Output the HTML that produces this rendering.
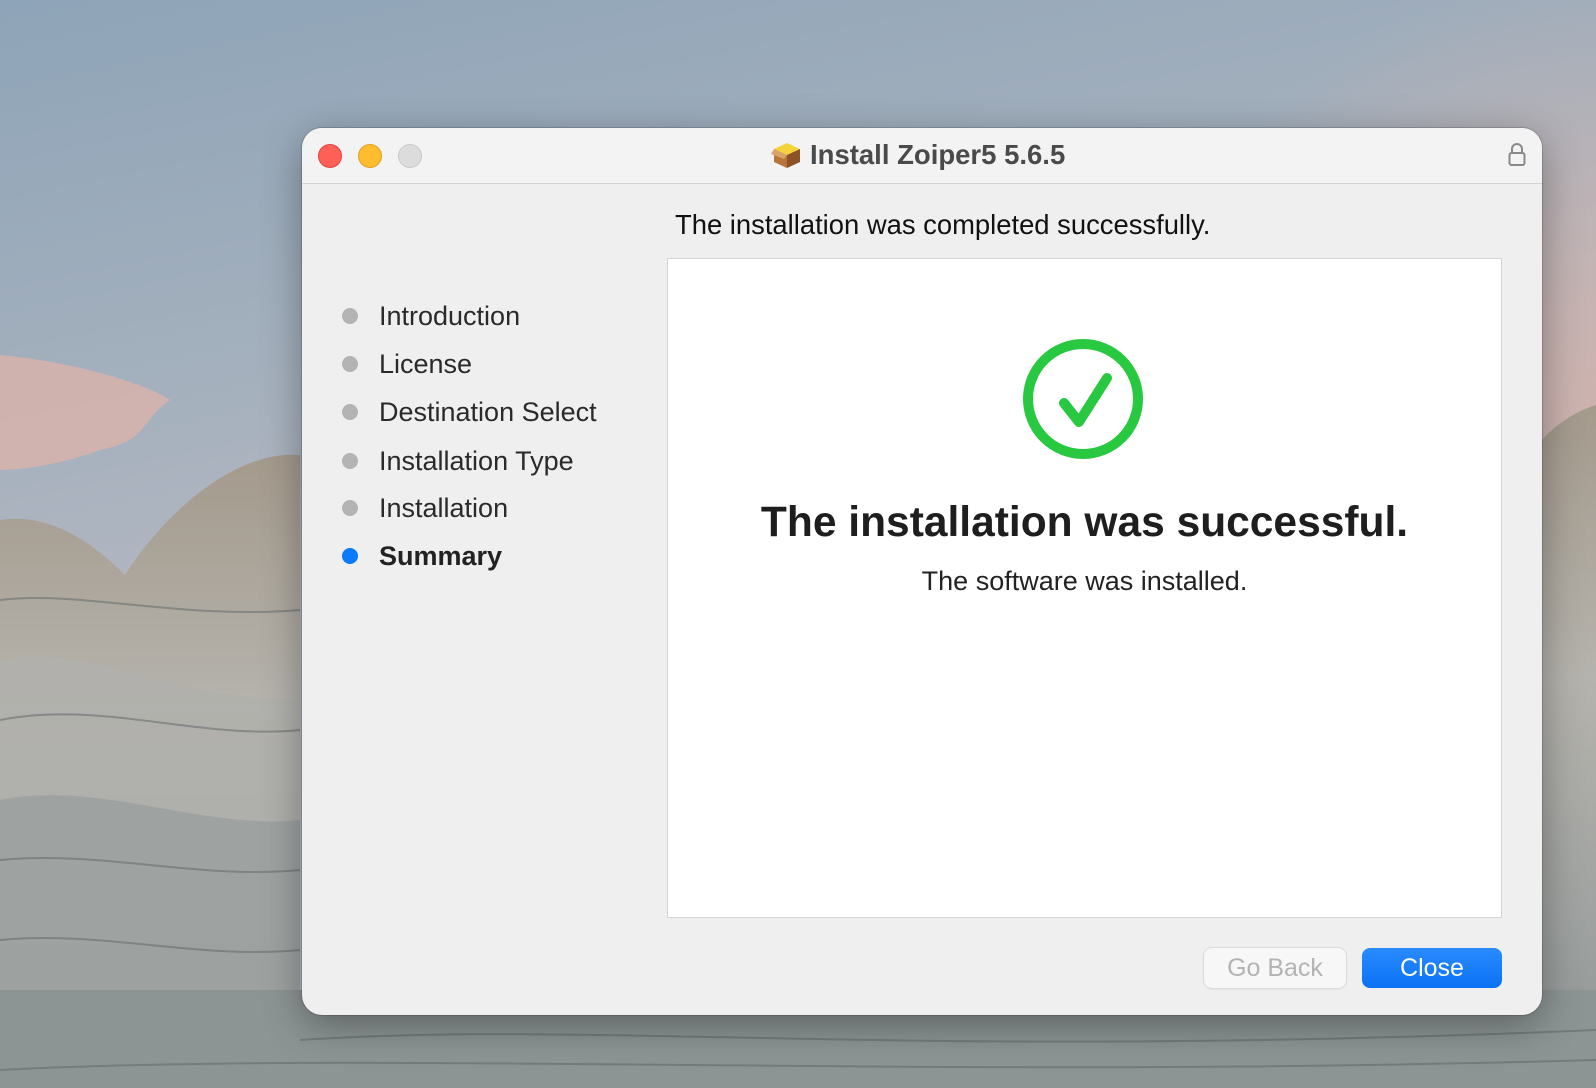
<!DOCTYPE html>
<html><head><meta charset="utf-8"><style>
*{margin:0;padding:0;box-sizing:border-box}
body{width:1596px;height:1088px;overflow:hidden;position:relative;font-family:"Liberation Sans",sans-serif;background:#9fb0c0}
.bg{position:absolute;left:0;top:0}
.win{position:absolute;left:302px;top:128px;width:1240px;height:887px;background:#efefef;border-radius:20px;overflow:hidden;box-shadow:0 10px 40px rgba(0,0,0,.35),0 0 0 1px rgba(0,0,0,.15)}
.tb{position:absolute;left:0;top:0;width:100%;height:56px;background:#f3f3f3;border-bottom:1px solid #d3d3d3}
.dot{position:absolute;top:16px;width:24px;height:24px;border-radius:50%}
.title{position:absolute;left:508px;top:10px;font-size:27.5px;font-weight:bold;color:#4a4a4a;line-height:34px}
.t{position:absolute;white-space:nowrap;color:#222}
.side .b{position:absolute;left:40px;width:16px;height:16px;border-radius:50%;background:#b4b4b4}
.side .t{left:77px;font-size:27px;line-height:30px;color:#2a2a2a}
.box{position:absolute;left:365px;top:130px;width:835px;height:660px;background:#fff;border:1px solid #d4d4d4}
.btn{position:absolute;top:820px;height:40px;border-radius:8px;font-size:25px;text-align:center;line-height:40px}
</style></head><body>
<svg class="bg" width="1596" height="1088">
<defs>
<linearGradient id="sky" x1="0" y1="0" x2="0.3" y2="1"><stop offset="0" stop-color="#8ea4b8"/><stop offset="0.35" stop-color="#a4b0bd"/><stop offset="0.6" stop-color="#b6b9c2"/></linearGradient>
<linearGradient id="rk" x1="0" y1="0" x2="0" y2="1"><stop offset="0" stop-color="#a49a8c"/><stop offset="0.4" stop-color="#b5b3ad"/><stop offset="1" stop-color="#8f9697"/></linearGradient>
<radialGradient id="sun" gradientUnits="userSpaceOnUse" cx="1596" cy="420" r="450"><stop offset="0" stop-color="#cdb2ad"/><stop offset="1" stop-color="#cdb2ad" stop-opacity="0"/></radialGradient>
</defs>
<rect width="1596" height="1088" fill="url(#sky)"/>
<rect width="1596" height="1088" fill="url(#sun)"/>
<path d="M0 355 C60 360 140 380 170 400 C140 420 150 440 100 450 C60 465 20 470 0 470Z" fill="#d7b3ab" opacity=".85"/>
<path d="M0 520 C60 510 110 560 125 575 C160 520 230 450 300 455 L300 1088 L0 1088Z" fill="url(#rk)"/>
<path d="M0 660 C80 640 160 700 300 700 L300 1088 L0 1088Z" fill="#b0b0ac" opacity=".8"/>
<path d="M0 800 C100 780 200 830 300 820 L300 1088 L0 1088Z" fill="#9a9f9f" opacity=".8"/>
<path d="M1542 440 C1560 420 1580 410 1596 405 L1596 1088 L1542 1088Z" fill="url(#rk)"/>
<rect x="0" y="990" width="1596" height="98" fill="#8c9494"/>
<g stroke="#5e6466" stroke-width="2" fill="none" opacity=".5">
<path d="M0 600 C80 590 180 620 300 610"/><path d="M0 720 C100 700 200 740 300 730"/><path d="M0 860 C100 850 200 880 300 870"/><path d="M0 940 C100 930 200 960 300 950"/><path d="M300 1040 C600 1020 900 1060 1596 1030"/><path d="M0 1070 C400 1050 900 1080 1596 1060"/>
</g>
</svg>
<div class="win">
 <div class="tb">
  <div class="dot" style="left:16px;background:#fe5f57;border:1px solid #e0443e"></div>
  <div class="dot" style="left:56px;background:#febc2e;border:1px solid #dea123"></div>
  <div class="dot" style="left:96px;background:#dcdcdc;border:1px solid #c8c8c8"></div>
  <svg style="position:absolute;left:469px;top:12px" width="32" height="30" viewBox="0 0 32 30"><path d="M3 9 L16 3 L29 9 L16 15Z" fill="#f3d23a"/><path d="M3 9 L16 15 L16 28 L3 22Z" fill="#b9743a"/><path d="M29 9 L16 15 L16 28 L29 22Z" fill="#8e5226"/><path d="M3 9 L0 14 L13 19 L16 15Z" fill="#d9a36a"/></svg>
  <div class="title">Install Zoiper5 5.6.5</div>
  <svg style="position:absolute;left:1206px;top:14px" width="18" height="26" viewBox="0 0 18 26"><path d="M4 11 V7 a5 5 0 0 1 10 0 V11" fill="none" stroke="#8a8a8a" stroke-width="2"/><rect x="1.5" y="11" width="15" height="12" rx="2" fill="none" stroke="#8a8a8a" stroke-width="2"/></svg>
 </div>
 <div class="t" style="left:373px;top:82px;font-size:27.4px;line-height:30px;color:#111">The installation was completed successfully.</div>
 <div class="side">
  <div class="b" style="top:180px"></div><div class="t" style="top:173px">Introduction</div>
  <div class="b" style="top:228px"></div><div class="t" style="top:221px">License</div>
  <div class="b" style="top:276px"></div><div class="t" style="top:269px">Destination Select</div>
  <div class="b" style="top:325px"></div><div class="t" style="top:318px">Installation Type</div>
  <div class="b" style="top:372px"></div><div class="t" style="top:365px">Installation</div>
  <div class="b" style="top:420px;background:#0a7aff"></div><div class="t" style="top:413px;font-weight:bold;color:#222">Summary</div>
 </div>
 <div class="box">
  <svg style="position:absolute;left:350px;top:75px" width="130" height="130" viewBox="0 0 130 130"><circle cx="65" cy="65" r="55" fill="none" stroke="#28c840" stroke-width="10"/><path d="M46 69 L61 88 L89 44" fill="none" stroke="#28c840" stroke-width="10" stroke-linecap="round" stroke-linejoin="round"/></svg>
  <div class="t" style="left:0;width:833px;text-align:center;top:238px;font-size:42.5px;font-weight:bold;line-height:52px;color:#1e1e1e">The installation was successful.</div>
  <div class="t" style="left:0;width:833px;text-align:center;top:307px;font-size:27px;line-height:30px;color:#222">The software was installed.</div>
 </div>
 <div class="btn" style="left:902px;width:142px;background:#f7f7f7;color:#b3b3b3;box-shadow:0 0 0 1px #dcdcdc,0 1px 2px rgba(0,0,0,.1)">Go Back</div>
 <div class="btn" style="left:1060px;width:140px;background:linear-gradient(#2a8bff,#0a72f5);color:#fff">Close</div>
</div>
</body></html>
